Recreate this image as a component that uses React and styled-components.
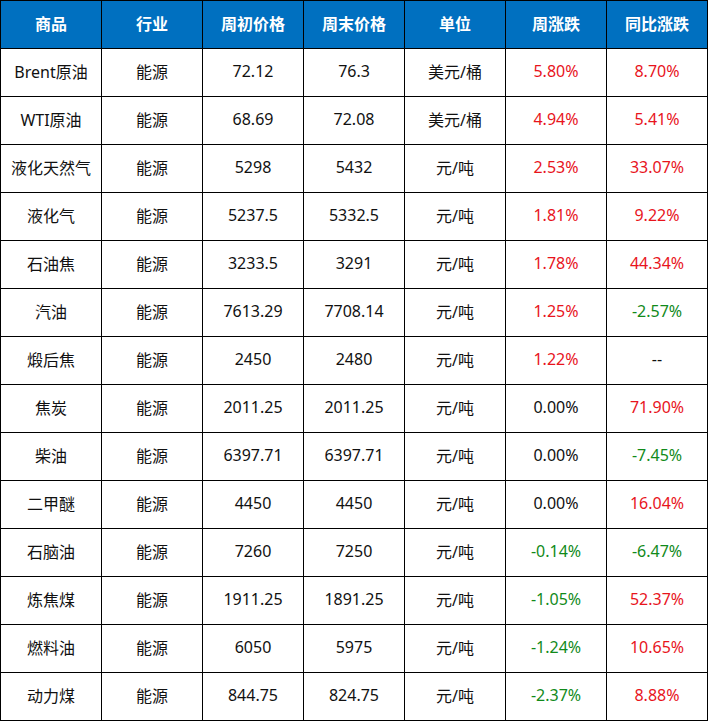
import React from "react";
import styled, { createGlobalStyle } from "styled-components";

const Global = createGlobalStyle`
  html, body { margin: 0; padding: 0; background: #fff; }
  body { font-family: "Noto Sans", "Noto Sans CJK SC", sans-serif; }
`;

const Table = styled.div`
  display: grid;
  grid-template-columns: repeat(7, 100px);
  grid-auto-rows: 47px;
  gap: 1px;
  padding: 1px;
  background: #000;
  width: 708px;
  box-sizing: border-box;
`;

const HeadCell = styled.div`
  background: #0070c0;
  color: #fff;
  font-weight: 700;
  font-size: 16px;
  display: flex;
  align-items: center;
  justify-content: center;
  padding-bottom: 3px;
`;

const Cell = styled.div`
  background: #fff;
  color: ${(p) => (p.$tone === "up" ? "#e8141c" : p.$tone === "down" ? "#118a1a" : "#111")};
  font-size: 16px;
  display: flex;
  align-items: center;
  justify-content: center;
  white-space: nowrap;
  padding-bottom: 3px;
`;

const headers = ["商品", "行业", "周初价格", "周末价格", "单位", "周涨跌", "同比涨跌"];

const rows = [
  ["Brent原油", "能源", "72.12", "76.3", "美元/桶", "5.80%", "8.70%"],
  ["WTI原油", "能源", "68.69", "72.08", "美元/桶", "4.94%", "5.41%"],
  ["液化天然气", "能源", "5298", "5432", "元/吨", "2.53%", "33.07%"],
  ["液化气", "能源", "5237.5", "5332.5", "元/吨", "1.81%", "9.22%"],
  ["石油焦", "能源", "3233.5", "3291", "元/吨", "1.78%", "44.34%"],
  ["汽油", "能源", "7613.29", "7708.14", "元/吨", "1.25%", "-2.57%"],
  ["煅后焦", "能源", "2450", "2480", "元/吨", "1.22%", "--"],
  ["焦炭", "能源", "2011.25", "2011.25", "元/吨", "0.00%", "71.90%"],
  ["柴油", "能源", "6397.71", "6397.71", "元/吨", "0.00%", "-7.45%"],
  ["二甲醚", "能源", "4450", "4450", "元/吨", "0.00%", "16.04%"],
  ["石脑油", "能源", "7260", "7250", "元/吨", "-0.14%", "-6.47%"],
  ["炼焦煤", "能源", "1911.25", "1891.25", "元/吨", "-1.05%", "52.37%"],
  ["燃料油", "能源", "6050", "5975", "元/吨", "-1.24%", "10.65%"],
  ["动力煤", "能源", "844.75", "824.75", "元/吨", "-2.37%", "8.88%"],
];

const toneOf = (v) => {
  if (v === "--") return "none";
  if (v.startsWith("-")) return "down";
  if (v === "0.00%") return "none";
  return "up";
};

export default function App() {
  return (
    <>
      <Global />
      <Table>
        {headers.map((h) => (
          <HeadCell key={h}>{h}</HeadCell>
        ))}
        {rows.map((r, i) =>
          r.map((v, j) => (
            <Cell key={`${i}-${j}`} $tone={j >= 5 ? toneOf(v) : "none"}>
              {v}
            </Cell>
          ))
        )}
      </Table>
    </>
  );
}
